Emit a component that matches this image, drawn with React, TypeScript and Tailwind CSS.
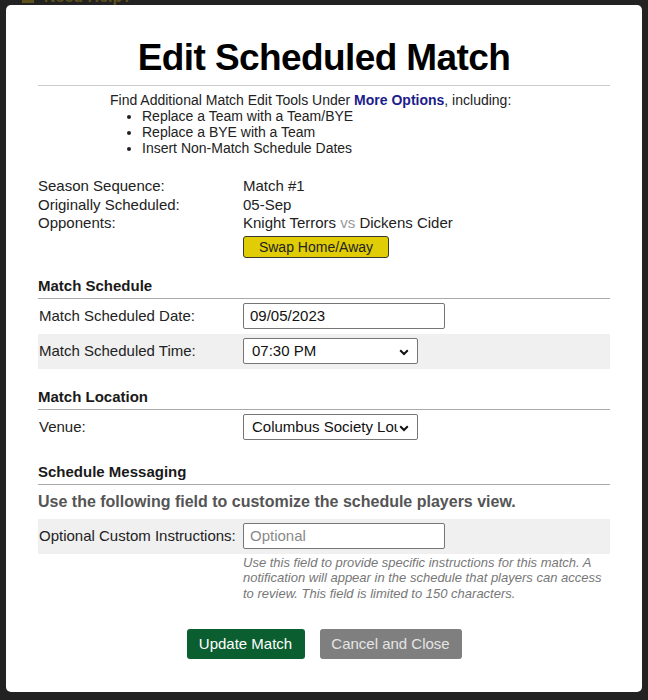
import React from 'react';

const INTRO_ITEMS = ['Replace a Team with a Team/BYE', 'Replace a BYE with a Team', 'Insert Non-Match Schedule Dates'];

function Chevron() {
  return (
    <svg width="10" height="7" viewBox="0 0 10 7" className="absolute right-[8px] top-[10px]">
      <path d="M1.2 1.3 L5 5 L8.8 1.3" fill="none" stroke="#111" strokeWidth="2" />
    </svg>
  );
}

function SectionHeader({ title }: { title: string }) {
  return (
    <div className="h-[23px] pb-[2px] border-b border-[#a9a9a9] font-bold text-[15px] leading-[20px] text-[#1a1a1a]">
      {title}
    </div>
  );
}

function Row({ label, shaded, children }: { label: string; shaded?: boolean; children: React.ReactNode }) {
  return (
    <div className={`flex items-center h-[35px] ${shaded ? 'bg-[#f0f0f0]' : ''}`}>
      <div className="w-[205px] pl-[1px] text-[15px] text-[#222]">{label}</div>
      {children}
    </div>
  );
}

function FakeSelect({ value, width }: { value: string; width: string }) {
  return (
    <div className={`relative h-[26px] ${width} bg-white border border-[#767676] rounded-[2px] text-[15px] leading-[24px] pl-[8px] text-[#111] whitespace-nowrap`}>
      <span className="block w-[146px] overflow-hidden">{value}</span>
      <Chevron />
    </div>
  );
}

export default function App() {
  return (
    <div className="w-[648px] h-[700px] bg-[#222222] overflow-hidden relative font-['Liberation_Sans',Arial,sans-serif]">
      {/* page behind the overlay, only a sliver shows */}
      <div className="h-[5px] overflow-hidden flex items-start pl-[22px] gap-[10px]">
        <div className="mt-[-7px] w-[12px] h-[10px] bg-[#5e501c]" />
        <div className="mt-[-15px] text-[16px] font-bold text-[#5e501c]">Need Help?</div>
      </div>

      <div className="ml-[6px] w-[636px] h-[687px] bg-white rounded-[5px] px-[32px]">
        <h1 className="pt-[31px] text-center text-[37px] leading-[44px] font-bold text-black tracking-[-0.6px]">
          Edit Scheduled Match
        </h1>
        <div className="mt-[5px] border-t border-[#cccccc]" />

        <div className="mt-[6px] text-[14px] leading-[16px] text-[#222]">
          <div className="ml-[72px]">
            Find Additional Match Edit Tools Under <span className="font-bold text-[#1c1c8a]">More Options</span>, including:
          </div>
          <ul className="ml-[86px] list-disc pl-[18px]">
            {INTRO_ITEMS.map((item) => (
              <li key={item}>{item}</li>
            ))}
          </ul>
        </div>

        <div className="mt-[21px] text-[15px] leading-[18.5px] text-[#222]">
          <div className="flex">
            <div className="w-[205px]">Season Sequence:</div>
            <div>Match #1</div>
          </div>
          <div className="flex">
            <div className="w-[205px]">Originally Scheduled:</div>
            <div>05-Sep</div>
          </div>
          <div className="flex">
            <div className="w-[205px]">Opponents:</div>
            <div>
              Knight Terrors <span className="text-[#9a9a9a]">vs</span> Dickens Cider
            </div>
          </div>
          <div className="flex mt-[3px]">
            <div className="w-[205px]" />
            <button className="w-[146px] h-[22px] bg-[#e0cd06] border border-[#3a3a2a] rounded-[3px] text-[14px] leading-[20px] text-[#222]">
              Swap Home/Away
            </button>
          </div>
        </div>

        <div className="mt-[18px]">
          <SectionHeader title="Match Schedule" />
          <Row label="Match Scheduled Date:">
            <div className="h-[26px] w-[202px] border border-[#767676] rounded-[2px] text-[15px] leading-[24px] pl-[6px] text-[#111]">
              09/05/2023
            </div>
          </Row>
          <Row label="Match Scheduled Time:" shaded>
            <FakeSelect value="07:30 PM" width="w-[175px]" />
          </Row>
        </div>

        <div className="mt-[18px]">
          <SectionHeader title="Match Location" />
          <Row label="Venue:">
            <FakeSelect value="Columbus Society Lounge" width="w-[175px]" />
          </Row>
        </div>

        <div className="mt-[17px]">
          <SectionHeader title="Schedule Messaging" />
          <div className="mt-[5px] text-[16px] leading-[24px] font-bold text-[#555]">
            Use the following field to customize the schedule players view.
          </div>
          <div className="mt-[5px]">
            <Row label="Optional Custom Instructions:" shaded>
              <div className="h-[26px] w-[202px] bg-white border border-[#767676] rounded-[2px] text-[15px] leading-[24px] pl-[6px] text-[#8a8a8a]">
                Optional
              </div>
            </Row>
          </div>
          <p className="mt-[1px] ml-[205px] w-[366px] italic text-[13px] leading-[15.5px] text-[#777]">
            Use this field to provide specific instructions for this match. A notification will appear in the schedule that players can access to review. This field is limited to 150 characters.
          </p>
        </div>

        <div className="mt-[28px] flex justify-center gap-[15px]">
          <button className="w-[118px] h-[30px] bg-[#0b5e2f] rounded-[3px] text-white text-[15px]">Update Match</button>
          <button className="w-[142px] h-[30px] bg-[#7f7f7f] rounded-[3px] text-[#e4e4e4] text-[15px]">Cancel and Close</button>
        </div>
      </div>
    </div>
  );
}
